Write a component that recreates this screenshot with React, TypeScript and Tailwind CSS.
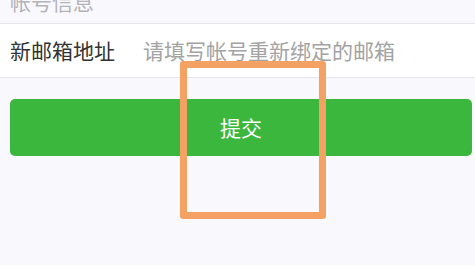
import React from 'react';

export default function App() {
  return (
    <div
      className="relative w-[475px] h-[265px] overflow-hidden bg-[#f9f8fd]"
      style={{ fontFamily: '"Noto Sans CJK SC", "Noto Sans", sans-serif' }}
    >
      {/* Section title (cut off at top) */}
      <div className="h-[23px] flex items-end px-[10px] overflow-hidden">
        <span className="text-[21px] leading-[21px] text-[#b3b3b8] mb-[11px]">帐号信息</span>
      </div>

      {/* Form row */}
      <div className="h-[55px] bg-white border-y border-[#e6e5ea] flex items-center px-[10px]">
        <span className="text-[21px] text-[#333333] w-[133px] shrink-0">新邮箱地址</span>
        <input
          className="flex-1 text-[21px] text-[#333333] placeholder:text-[#a3a3a3] outline-none bg-transparent"
          placeholder="请填写帐号重新绑定的邮箱"
        />
      </div>

      {/* Submit */}
      <div className="pl-[10px] pr-[3px] pt-[21px]">
        <button className="w-full h-[57px] rounded-[5px] bg-[#3cb73e] text-white text-[21px] flex items-center justify-center">
          提交
        </button>
      </div>

      {/* Annotation box */}
      <div className="absolute left-[180px] top-[61px] w-[146px] h-[158px] border-[7px] border-[#f4a264] rounded-[3px] pointer-events-none" />
    </div>
  );
}
